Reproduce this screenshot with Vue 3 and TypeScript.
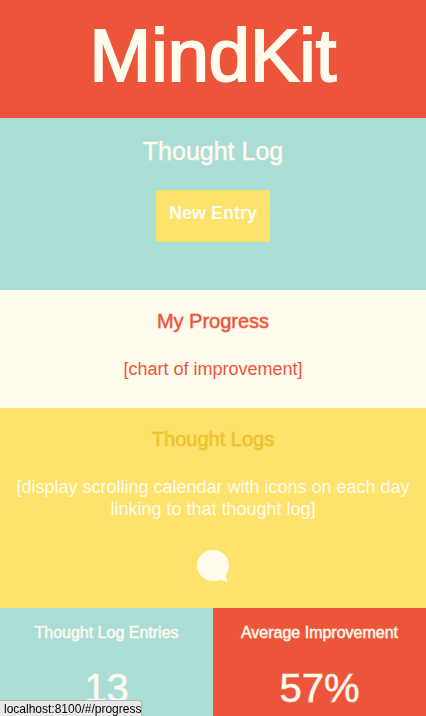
<script setup lang="ts">
interface Stat {
  label: string
  value: string
  tone: string
}

const stats: Stat[] = [
  { label: 'Thought Log Entries', value: '13', tone: 'teal' },
  { label: 'Average Improvement', value: '57%', tone: 'red' },
]
</script>

<template>
  <main class="page">
    <header class="banner red">
      <h1>MindKit</h1>
    </header>

    <section class="entry teal">
      <h2>Thought Log</h2>
      <button type="button" class="new-entry">New Entry</button>
    </section>

    <section class="panel cream">
      <h3>My Progress</h3>
      <p>[chart of improvement]</p>
    </section>

    <section class="panel yellow">
      <h3>Thought Logs</h3>
      <p>[display scrolling calendar with icons on each day linking to that thought log]</p>
      <a class="chat" href="#/progress" aria-label="Open thought log">
        <svg viewBox="0 0 32 32" width="32" height="32" aria-hidden="true">
          <path
            d="M16 0C25 0 32 7 32 15.500c0 3.500-1 6.500-3 9 0 2.500.6 4.800 1.600 7.200-2.400-.2-4.600-1-6.600-2.200-2.400 1.100-5 1.500-8 1.500C7 31 0 24 0 15.500S7 0 16 0z"
          />
        </svg>
      </a>
    </section>

    <section class="stats">
      <article v-for="stat in stats" :key="stat.label" class="stat" :class="stat.tone">
        <h4>{{ stat.label }}</h4>
        <strong>{{ stat.value }}</strong>
      </article>
    </section>

    <div class="status">localhost:8100/#/progress</div>
  </main>
</template>

<style>
body {
  background: #fffcee;
}
</style>

<style scoped>
.page {
  display: flex;
  flex-direction: column;
  min-height: 100vh;
  font-family: "Liberation Sans", Arial, sans-serif;
  color: #fffcee;
  text-align: center;
}

h1,
h2,
h3,
h4,
p {
  margin: 0;
  font-weight: 400;
}

/* Half-strength outline gives the headings a medium weight. */
h2,
h3,
h4,
.stat strong {
  -webkit-text-stroke: 1px color-mix(in srgb, currentColor 50%, transparent);
}

.red {
  background: #ed553b;
}

.teal {
  background: #aaddd6;
}

.cream {
  background: #fffcee;
  color: #ed553b;
}

.yellow {
  padding-bottom: 26px;
  background: #fde26c;
}

.banner {
  padding: 14px 10px 20px;
}

h1 {
  font-size: 74px;
  line-height: 84px;
  -webkit-text-stroke: 2px currentColor;
}

.entry {
  display: flex;
  flex-direction: column;
  align-items: center;
  gap: 24px;
  padding: 18px 10px 48px;
}

h2 {
  font-size: 25px;
  line-height: 30px;
}

.new-entry {
  height: 52px;
  padding: 0 13px 6px;
  border: 0;
  border-radius: 2px;
  background: #fde26c;
  color: #fffcee;
  font: 700 18px/22px "Liberation Sans", Arial, sans-serif;
  cursor: pointer;
}

.panel {
  display: flex;
  flex-direction: column;
  align-items: center;
  padding: 18px 10px 28px;
}

.panel.yellow {
  padding-bottom: 26px;
}

h3 {
  margin-bottom: 24px;
  font-size: 20px;
  line-height: 26px;
}

.yellow h3 {
  color: #edc32c;
}

.panel p {
  font-size: 18px;
  line-height: 22px;
}

.chat {
  display: flex;
  margin-top: 30px;
  fill: #fffcee;
}

.stats {
  display: grid;
  grid-template-columns: 1fr 1fr;
  flex: 1;
}

.stat {
  display: flex;
  flex-direction: column;
  align-items: center;
  gap: 24px;
  padding: 16px 10px 0;
}

h4 {
  font-size: 16px;
  line-height: 18px;
  white-space: nowrap;
}

.stat strong {
  font-size: 40px;
  font-weight: 400;
  line-height: 44px;
}

.status {
  position: fixed;
  bottom: 0;
  left: 0;
  box-sizing: border-box;
  height: 16px;
  padding: 0 0 0 4px;
  border: 1px solid #b4b4b4;
  border-width: 1px 1px 0 0;
  border-radius: 0 3px 0 0;
  background: #e8e8e8;
  color: #000;
  font-size: 12px;
  line-height: 16px;
}
</style>
